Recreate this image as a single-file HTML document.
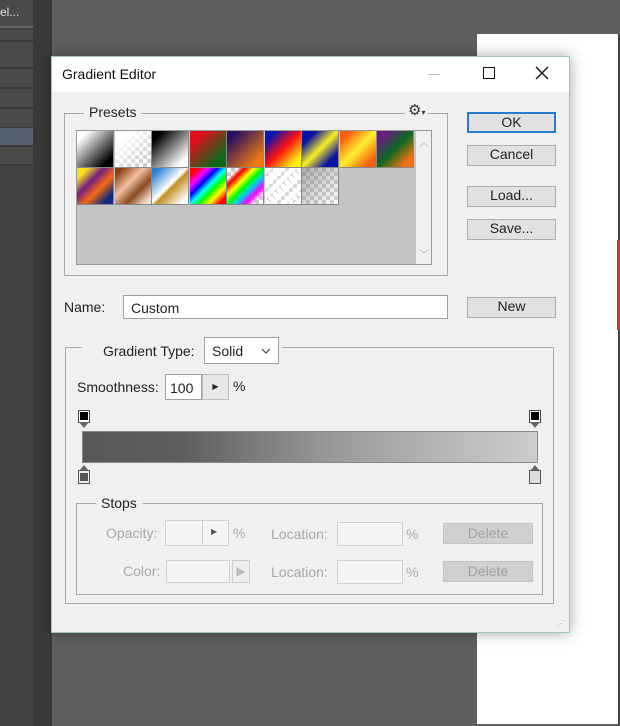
<!DOCTYPE html>
<html><head><meta charset="utf-8"><style>
*{box-sizing:border-box;margin:0;padding:0}
body{width:620px;height:726px;overflow:hidden;background:#5f5f5f;font-family:"Liberation Sans",sans-serif;font-size:13px;color:#222;position:relative}
.a{position:absolute}
.row{position:absolute;left:0;width:33px;background:#4a4a4a;border-bottom:2px solid #3a3a3a}
.btn{position:absolute;background:#e1e1e1;border:1px solid #adadad;text-align:center;font-size:14px;line-height:17px;color:#222}
.chk{background-color:#fff;background-image:conic-gradient(#ccc 25%,#fff 0 50%,#ccc 0 75%,#fff 0);background-size:8px 8px}
.sw{position:absolute;width:37px;height:37px;border-right:1px solid #888;border-bottom:1px solid #888}
.grp{position:absolute;border:1px solid #a8a8a8}
.lbl{position:absolute;background:#f0f0f0;padding:0 5px;font-size:14px}
.field{position:absolute;background:#fff;border:1px solid #a0a0a0}
.dis{color:#a8a8a8;font-size:14px;position:absolute}
.dfield{position:absolute;background:#f4f4f4;border:1px solid #d0d0d0}
</style></head><body>
<div class="a" style="left:0;top:0;width:33px;height:726px;background:#434343"></div>
<div class="a" style="left:0;top:0;width:33px;height:28px;background:#4a4a4a;border-bottom:2px solid #666"></div>
<div class="a" style="left:0;top:5px;color:#ddd;font-size:12px">el...</div>
<div class="row" style="top:30px;height:12px"></div>
<div class="row" style="top:42px;height:27px"></div>
<div class="row" style="top:69px;height:20px"></div>
<div class="row" style="top:89px;height:20px"></div>
<div class="row" style="top:109px;height:20px"></div>
<div class="row" style="top:128px;height:19px;background:#56606e"></div>
<div class="row" style="top:147px;height:19px"></div>
<div class="a" style="left:33px;top:0;width:19px;height:726px;background:#393939"></div>
<div class="a" style="left:477px;top:34px;width:141px;height:690px;background:#fff"></div>
<div class="a" style="left:618px;top:34px;width:2px;height:692px;background:#444"></div>
<div class="a" style="left:617px;top:240px;width:3px;height:90px;background:#c0392b"></div>
<!-- dialog -->
<div class="a" style="left:51px;top:56px;width:519px;height:577px;background:#f0f0f0;border:1px solid #9fc4bb;box-shadow:0 0 14px rgba(0,0,0,.35)"></div>
<div class="a" style="left:52px;top:57px;width:517px;height:35px;background:#fff"></div>
<div class="a" style="left:62px;top:66px;font-size:14px;color:#111">Gradient Editor</div>
<div class="a" style="left:428px;top:74px;width:12px;height:1px;background:#bbb"></div>
<div class="a" style="left:483px;top:67px;width:12px;height:12px;border:1.5px solid #111"></div>
<svg class="a" style="left:535px;top:66px" width="14" height="14"><path d="M1 1L13 13M13 1L1 13" stroke="#111" stroke-width="1.4"/></svg>
<!-- presets -->
<div class="grp" style="left:64px;top:113px;width:384px;height:163px"></div>
<div class="lbl" style="left:84px;top:104px">Presets</div>
<div class="a" style="left:405px;top:101px;background:#f0f0f0;padding:0 3px;font-size:15px;color:#333">⚙<span style="font-size:8px">▾</span></div>
<div class="a" style="left:76px;top:130px;width:356px;height:135px;background:#c4c4c4;border:1px solid #999"></div>
<div class="a" style="left:416px;top:131px;width:15px;height:133px;background:#f0f0f0"></div>
<div class="a" style="left:419px;top:134px;color:#aaa;font-size:10px">︿</div>
<div class="a" style="left:419px;top:246px;color:#aaa;font-size:10px">﹀</div>
<div class="sw" style="left:77px;top:131px;background:linear-gradient(135deg,#fff 15%,#000 85%)"></div>
<div class="sw chk" style="left:114.5px;top:131px"><div style="width:100%;height:100%;background:linear-gradient(135deg,#fff 20%,rgba(255,255,255,0) 85%)"></div></div>
<div class="sw" style="left:152px;top:131px;background:linear-gradient(135deg,#000 15%,#fff 85%)"></div>
<div class="sw" style="left:189.5px;top:131px;background:linear-gradient(135deg,#e0101a 20%,#0a6a1a 80%)"></div>
<div class="sw" style="left:227px;top:131px;background:linear-gradient(135deg,#281060 15%,#f07a10 85%)"></div>
<div class="sw" style="left:264.5px;top:131px;background:linear-gradient(135deg,#0a14b0 15%,#ff1010 50%,#ffee10 85%)"></div>
<div class="sw" style="left:302px;top:131px;background:linear-gradient(135deg,#0a14a0 20%,#f8f020 50%,#0a14a0 80%)"></div>
<div class="sw" style="left:339.5px;top:131px;background:linear-gradient(135deg,#f86010 15%,#fff030 50%,#f86010 85%)"></div>
<div class="sw" style="left:377px;top:131px;background:linear-gradient(135deg,#6a1a80 15%,#0a6a20 50%,#f87010 85%)"></div>
<div class="sw" style="left:77px;top:168px;background:linear-gradient(135deg,#f8e020 15%,#702080 38%,#f86a10 60%,#102a80 85%)"></div>
<div class="sw" style="left:114.5px;top:168px;background:linear-gradient(135deg,#8a4010 10%,#f0c0a0 40%,#8a4a20 65%,#f0dcc8 90%)"></div>
<div class="sw" style="left:152px;top:168px;background:linear-gradient(135deg,#2a80d0 10%,#fff 48%,#c09020 55%,#fff 90%)"></div>
<div class="sw" style="left:189.5px;top:168px;background:linear-gradient(135deg,#f00 10%,#f0f 25%,#00f 38%,#0ff 50%,#0f0 62%,#ff0 75%,#f00 90%)"></div>
<div class="sw chk" style="left:227px;top:168px"><div style="width:100%;height:100%;background:linear-gradient(135deg,transparent 15%,#f00 25%,#ff0 38%,#0f0 50%,#0cf 62%,#f0f 75%,transparent 88%)"></div></div>
<div class="sw chk" style="left:264.5px;top:168px"><div style="width:100%;height:100%;background:repeating-linear-gradient(135deg,rgba(255,255,255,.9) 0 5px,rgba(255,255,255,.2) 5px 9px)"></div></div>
<div class="sw chk" style="left:302px;top:168px"><div style="width:100%;height:100%;background:linear-gradient(135deg,rgba(120,120,120,.6),rgba(255,255,255,.2))"></div></div>
<!-- buttons -->
<div class="btn" style="left:467px;top:112px;width:89px;height:21px;border:2px solid #2a7ad0;line-height:17px">OK</div>
<div class="btn" style="left:467px;top:145px;width:89px;height:21px">Cancel</div>
<div class="btn" style="left:467px;top:186px;width:89px;height:21px">Load...</div>
<div class="btn" style="left:467px;top:219px;width:89px;height:21px">Save...</div>
<div class="btn" style="left:467px;top:297px;width:89px;height:21px">New</div>
<!-- name -->
<div class="a" style="left:64px;top:299px;font-size:14px">Name:</div>
<div class="field" style="left:123px;top:295px;width:325px;height:24px;padding:4px 7px;font-size:14px">Custom</div>
<!-- gradient group -->
<div class="grp" style="left:65px;top:347px;width:489px;height:257px"></div>
<div class="a" style="left:82px;top:340px;width:200px;height:16px;background:#f0f0f0"></div>
<div class="a" style="left:103px;top:343px;font-size:14px">Gradient Type:</div>
<div class="field" style="left:204px;top:337px;width:75px;height:27px;padding:5px 7px;font-size:14px">Solid<svg style="position:absolute;right:7px;top:10px" width="10" height="6"><path d="M1 1L5 5L9 1" stroke="#333" fill="none"/></svg></div>
<div class="a" style="left:77px;top:379px;font-size:14px">Smoothness:</div>
<div class="field" style="left:165px;top:374px;width:37px;height:26px;padding:5px 4px;font-size:14px">100</div>
<div class="a" style="left:202px;top:374px;width:27px;height:26px;background:#e8e8e8;border:1px solid #bbb;font-size:8px;text-align:center;line-height:24px">▶</div>
<div class="a" style="left:233px;top:378px;font-size:14px">%</div>
<div class="a" style="left:78px;top:410px;width:12px;height:13px;background:#fff;border:1px solid #444"><div style="margin:1px;width:8px;height:8px;background:#000"></div></div>
<div class="a" style="left:79px;top:422px;width:0;height:0;border-left:5px solid transparent;border-right:5px solid transparent;border-top:6px solid #666"></div>
<div class="a" style="left:529px;top:410px;width:12px;height:13px;background:#fff;border:1px solid #444"><div style="margin:1px;width:8px;height:8px;background:#000"></div></div>
<div class="a" style="left:530px;top:422px;width:0;height:0;border-left:5px solid transparent;border-right:5px solid transparent;border-top:6px solid #666"></div>
<div class="a" style="left:82px;top:431px;width:456px;height:32px;border:1px solid #888;background:linear-gradient(90deg,#575757 0%,#5e5e5e 22%,#9a9a9a 55%,#cdcdcd 100%)"></div>
<div class="a" style="left:79px;top:465px;width:0;height:0;border-left:5px solid transparent;border-right:5px solid transparent;border-bottom:6px solid #666"></div>
<div class="a" style="left:78px;top:470px;width:12px;height:14px;background:#eee;border:1px solid #555"><div style="margin:2px 1px;width:8px;height:8px;background:#555"></div></div>
<div class="a" style="left:530px;top:465px;width:0;height:0;border-left:5px solid transparent;border-right:5px solid transparent;border-bottom:6px solid #666"></div>
<div class="a" style="left:529px;top:470px;width:12px;height:14px;background:#ddd;border:1px solid #555"></div>
<!-- stops -->
<div class="grp" style="left:76px;top:503px;width:467px;height:92px"></div>
<div class="lbl" style="left:96px;top:495px">Stops</div>
<div class="dis" style="left:106px;top:525px">Opacity:</div>
<div class="dfield" style="left:165px;top:520px;width:64px;height:26px"></div>
<div class="a" style="left:202px;top:521px;width:1px;height:24px;background:#ccc"></div>
<div class="a" style="left:211px;top:527px;font-size:8px;color:#555">▶</div>
<div class="dis" style="left:233px;top:525px">%</div>
<div class="dis" style="left:271px;top:526px">Location:</div>
<div class="dfield" style="left:337px;top:522px;width:66px;height:24px"></div>
<div class="dis" style="left:406px;top:526px">%</div>
<div class="a" style="left:443px;top:523px;width:90px;height:21px;background:#d0d0d0;border:1px solid #c4c4c4;color:#a0a0a0;text-align:center;font-size:14px;line-height:19px">Delete</div>
<div class="dis" style="left:123px;top:563px">Color:</div>
<div class="dfield" style="left:166px;top:560px;width:64px;height:23px"></div>
<div class="a" style="left:232px;top:560px;width:18px;height:23px;background:#eee;border:1px solid #ccc;color:#bbb;font-size:12px;text-align:center;line-height:21px">▶</div>
<div class="dis" style="left:271px;top:564px">Location:</div>
<div class="dfield" style="left:337px;top:560px;width:66px;height:24px"></div>
<div class="dis" style="left:406px;top:564px">%</div>
<div class="a" style="left:443px;top:561px;width:90px;height:21px;background:#d0d0d0;border:1px solid #c4c4c4;color:#a0a0a0;text-align:center;font-size:14px;line-height:19px">Delete</div>
<div class="a" style="left:557px;top:620px;font-size:8px;color:#999;line-height:8px">⋰</div>
</body></html>
